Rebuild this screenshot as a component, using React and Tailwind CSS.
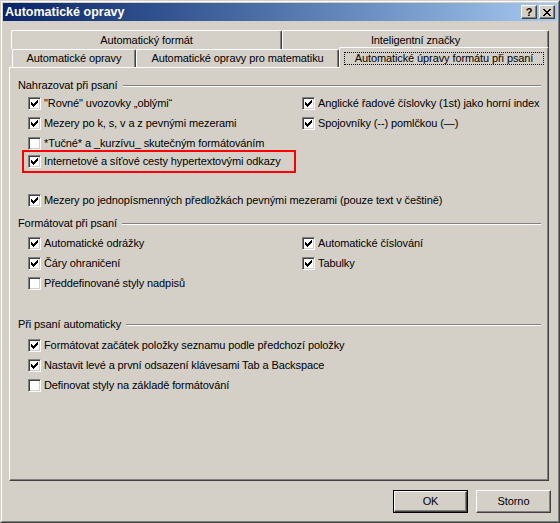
import React from 'react';

const FONT = "font-['Liberation_Sans',Arial,sans-serif]";

// classic 7x7 check mark, three pixels tall per column
const CHECK_COLS = [2, 3, 4, 3, 2, 1, 0];

// 8x7 close glyph
const CLOSE_ROWS = ['11000011', '01100110', '00111100', '00011000', '00111100', '01100110', '11000011'];

function CheckMark() {
  return (
    <svg width="7" height="7" viewBox="0 0 7 7" shapeRendering="crispEdges">
      {CHECK_COLS.map((y, x) => (
        <rect key={x} x={x} y={y} width="1" height="3" fill="#000" />
      ))}
    </svg>
  );
}

function CloseGlyph() {
  const cells = [];
  CLOSE_ROWS.forEach((row, y) =>
    row.split('').forEach((c, x) => {
      if (c === '1') cells.push(<rect key={`${x}-${y}`} x={x} y={y} width="1" height="1" fill="#000" />);
    })
  );
  return (
    <svg width="8" height="7" viewBox="0 0 8 7" shapeRendering="crispEdges">
      {cells}
    </svg>
  );
}

function Checkbox({ checked }) {
  return (
    <div className="w-[13px] h-[13px] shrink-0 bg-white border border-t-[#808080] border-l-[#808080] border-r-white border-b-white shadow-[inset_1px_1px_#404040,inset_-1px_-1px_#d4d0c8] flex items-center justify-center">
      {checked && <CheckMark />}
    </div>
  );
}

function Option({ checked, children }) {
  return (
    <div className="h-[20px] flex items-center gap-[3px] whitespace-nowrap">
      <Checkbox checked={checked} />
      <span>{children}</span>
    </div>
  );
}

function GroupHeader({ children, className = '' }) {
  return (
    <div className={`h-[15px] flex items-center pl-[8px] pr-[7px] ${className}`}>
      <span className="whitespace-nowrap">{children}</span>
      <div className="flex-1 ml-[5px] h-[2px] border-t border-t-[#808080] border-b border-b-white" />
    </div>
  );
}

function TitleButton({ children }) {
  return (
    <div className="w-[16px] h-[14px] bg-[#d4d0c8] border border-t-white border-l-white border-r-[#404040] border-b-[#404040] shadow-[inset_-1px_-1px_#808080] flex items-center justify-center text-[11px] font-bold text-black leading-none">
      {children}
    </div>
  );
}

function Tab({ width, children }) {
  return (
    <div
      className={`${width} h-full flex items-center justify-center bg-[#d4d0c8] border-l border-t border-l-white border-t-white border-r border-r-[#404040] rounded-t-[2px] shadow-[inset_-1px_0_#808080] whitespace-nowrap`}
    >
      {children}
    </div>
  );
}

function DialogButton({ children, isDefault }) {
  const face = (
    <div className="w-full h-full flex items-center justify-center bg-[#d4d0c8] border border-t-white border-l-white border-r-[#404040] border-b-[#404040] shadow-[inset_-1px_-1px_#808080]">
      {children}
    </div>
  );
  return (
    <div className={`w-[75px] h-[23px] ${isDefault ? 'border border-black' : ''}`}>
      {face}
    </div>
  );
}

export default function App() {
  return (
    <div className={`w-[560px] h-[523px] bg-[#d4d0c8] text-[11px] tracking-[-0.1px] text-black leading-none ${FONT} border border-t-[#d4d0c8] border-l-[#d4d0c8] border-r-[#404040] border-b-[#404040]`}>
      <div className="h-full flex flex-col p-px border border-t-white border-l-white border-r-[#808080] border-b-[#808080]">
        {/* Title bar */}
        <div className="h-[18px] shrink-0 flex items-center bg-gradient-to-r from-[#0a246a] to-[#a6caf0] pl-[2px] pr-[2px]">
          <span className="text-white font-bold text-[12.5px] tracking-normal">Automatické opravy</span>
          <div className="ml-auto flex gap-[2px]">
            <TitleButton>?</TitleButton>
            <TitleButton>
              <CloseGlyph />
            </TitleButton>
          </div>
        </div>

        {/* Tab strip, two rows */}
        <div className="pt-[9px]">
          <div className="h-[19px] flex ml-[8px]">
            <Tab width="w-[271px]">Automatický formát</Tab>
            <Tab width="w-[267px]">Inteligentní značky</Tab>
          </div>
          <div className="h-[18px] flex items-end ml-[9px]">
            <Tab width="w-[124px]">Automatické opravy</Tab>
            <Tab width="w-[203px]">Automatické opravy pro matematiku</Tab>
            <div className="relative z-10 w-[210px] h-[21px] -mb-px flex items-stretch p-[4px] pb-[3px] bg-[#d4d0c8] border-l border-t border-l-white border-t-white border-r border-r-[#404040] rounded-t-[2px] shadow-[inset_-1px_0_#808080]">
              <div className="flex-1 flex items-center justify-center border border-dotted border-black whitespace-nowrap">
                Automatické úpravy formátu při psaní
              </div>
            </div>
          </div>
        </div>

        {/* Page */}
        <div className="ml-[6px] w-[540px] h-[414px] shrink-0 border-l border-t border-l-white border-t-white border-r border-b border-r-[#404040] border-b-[#404040] shadow-[inset_-1px_-1px_#808080] pt-[10px]">
          <GroupHeader>Nahrazovat při psaní</GroupHeader>
          <div className="grid grid-cols-[274px_1fr] pl-[18px]">
            <Option checked>"Rovné" uvozovky „oblými“</Option>
            <Option checked>Anglické řadové číslovky (1st) jako horní index</Option>
            <Option checked>Mezery po k, s, v a z pevnými mezerami</Option>
            <Option checked>Spojovníky (--) pomlčkou (—)</Option>
            <Option>*Tučné* a _kurzívu_ skutečným formátováním</Option>
            <div />
          </div>
          <div className="ml-[12px] -mt-[3px] w-[274px] h-[23px] border-2 border-[#ff0000] pl-[4px] flex items-center">
            <Option checked>Internetové a síťové cesty hypertextovými odkazy</Option>
          </div>
          <div className="pl-[18px] mt-[17px]">
            <Option checked>Mezery po jednopísmenných předložkách pevnými mezerami (pouze text v češtině)</Option>
          </div>

          <GroupHeader className="mt-[6px]">Formátovat při psaní</GroupHeader>
          <div className="grid grid-cols-[274px_1fr] pl-[18px] mt-[2px]">
            <Option checked>Automatické odrážky</Option>
            <Option checked>Automatické číslování</Option>
            <Option checked>Čáry ohraničení</Option>
            <Option checked>Tabulky</Option>
            <Option>Předdefinované styly nadpisů</Option>
            <div />
          </div>

          <GroupHeader className="mt-[24px]">Při psaní automaticky</GroupHeader>
          <div className="pl-[18px] mt-[3px]">
            <Option checked>Formátovat začátek položky seznamu podle předchozí položky</Option>
            <Option checked>Nastavit levé a první odsazení klávesami Tab a Backspace</Option>
            <Option>Definovat styly na základě formátování</Option>
          </div>
        </div>

        {/* Dialog buttons */}
        <div className="mt-[9px] flex justify-end gap-[8px] pr-[6px]">
          <DialogButton isDefault>OK</DialogButton>
          <DialogButton>Storno</DialogButton>
        </div>
      </div>
    </div>
  );
}
